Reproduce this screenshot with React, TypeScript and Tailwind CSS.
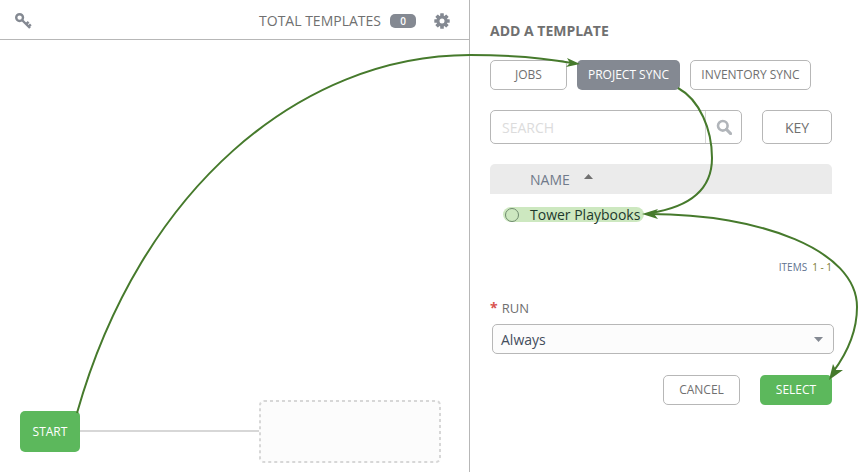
import React from "react";

function Key() {
  return (
    <svg width="17" height="17" viewBox="0 0 17 17" className="mt-[1px] text-[#848992]">
      <circle cx="4.6" cy="4.6" r="3.4" fill="none" stroke="currentColor" strokeWidth="2.4" />
      <path d="M7 7 L15 15 M11.2 11.2 L13.6 8.8 M13.6 13.6 L15.8 11.4" fill="none" stroke="currentColor" strokeWidth="2.4" />
    </svg>
  );
}

function Gear() {
  const teeth = [0, 45, 90, 135, 180, 225, 270, 315];
  return (
    <svg width="16" height="16" viewBox="0 0 16 16" className="text-[#848992]">
      {teeth.map((a) => (
        <rect key={a} x="6.2" y="0.3" width="3.6" height="3.4" rx="0.5" fill="currentColor" transform={`rotate(${a} 8 8)`} />
      ))}
      <circle cx="8" cy="8" r="4" fill="none" stroke="currentColor" strokeWidth="3" />
    </svg>
  );
}

function Search() {
  return (
    <svg width="16" height="16" viewBox="0 0 16 16" className="text-[#b1b5ba]">
      <circle cx="6.8" cy="6.8" r="4.8" fill="none" stroke="currentColor" strokeWidth="2.6" />
      <path d="M10.4 10.4 L14.6 14.6" fill="none" stroke="currentColor" strokeWidth="3" strokeLinecap="round" />
    </svg>
  );
}

function Arrows() {
  const c = "#467a2c";
  return (
    <svg width="858" height="472" viewBox="0 0 858 472" className="absolute left-0 top-0 pointer-events-none">
      <g fill="none" stroke={c} strokeWidth="2">
        <path d="M77 413 C 140 190 300 55 470 55 C 510 55 545 58 572 63" />
        <path d="M678 88 C 700 100 712 130 712 158 C 712 190 690 207 650 213" />
        <path d="M650 214 C 760 214 857 250 857 307 C 857 335 845 356 833 372" />
      </g>
      <g fill={c}>
        <path d="M580 64 L566 67 L570 63 L567 58 Z" />
        <path d="M642 214 L658 209 L654 214 L658 219 Z" />
        <path d="M829 380 L833 364 L836 370 L843 370 Z" />
      </g>
    </svg>
  );
}

export default function App() {
  return (
    <div className="relative flex h-[472px] w-[858px] overflow-hidden bg-white font-['Open_Sans',sans-serif] text-[#707070]">
      <div className="flex w-[470px] shrink-0 flex-col border-r border-[#b7b7b7]">
        <div className="flex h-10 items-center border-b border-[#b7b7b7] pl-[15px] pr-[19px] pt-[2px]">
          <Key />
          <div className="ml-auto text-[14px] leading-none text-[#707070]">TOTAL TEMPLATES</div>
          <div className="ml-[9px] flex h-[14px] w-[26px] items-center justify-center rounded-[5px] bg-[#848992] text-[10px] font-semibold leading-none text-white">0</div>
          <div className="ml-[18px] flex"><Gear /></div>
        </div>
        <div className="relative flex-1">
          <div className="absolute left-[20px] top-[371px] flex h-[41px] w-[60px] items-center justify-center rounded-[5px] bg-[#5cb85c] text-[12px] text-white">START</div>
          <div className="absolute left-[80px] top-[390px] h-[2px] w-[180px] bg-[#d7d7d7]" />
          <div className="absolute left-[259px] top-[360px] h-[63px] w-[182px] rounded-[5px] bg-[#fcfcfc]">
            <svg width="182" height="63" viewBox="0 0 182 63" className="block">
              <rect x="1" y="1" width="180" height="61" rx="4" fill="none" stroke="#d7d7d7" strokeWidth="2" strokeDasharray="3 3" />
            </svg>
          </div>
        </div>
      </div>

      <div className="flex flex-1 flex-col pl-[20px] pr-[26px]">
        <div className="mt-[21px] text-[14px] font-bold leading-[19px] text-[#707070]">ADD A TEMPLATE</div>
        <div className="mt-[20px] flex gap-[10px] text-[12px]">
          <div className="flex h-[30px] w-[77px] items-center justify-center rounded-[5px] border border-[#b7b7b7]">JOBS</div>
          <div className="flex h-[30px] w-[103px] items-center justify-center rounded-[5px] bg-[#848992] text-white">PROJECT SYNC</div>
          <div className="flex h-[30px] w-[121px] items-center justify-center rounded-[5px] border border-[#b7b7b7]">INVENTORY SYNC</div>
        </div>
        <div className="mt-[20px] flex">
          <div className="flex h-[34px] w-[252px] rounded-[5px] border border-[#b7b7b7]">
            <div className="flex flex-1 items-center border-r border-[#d7d7d7] pl-[11px] text-[14px] text-[#dcdcdc]">SEARCH</div>
            <div className="flex w-[35px] items-center justify-center"><Search /></div>
          </div>
          <div className="ml-[20px] flex h-[34px] w-[70px] items-center justify-center rounded-[5px] border border-[#b7b7b7] text-[14px]">KEY</div>
        </div>
        <div className="mt-[20px] flex h-[30px] w-[342px] items-center rounded-t-[5px] bg-[#ebebeb] pl-[40px] text-[14px] text-[#707a8a]">
          NAME
          <svg width="9" height="5" viewBox="0 0 9 5" className="mb-[5px] ml-[14px] text-[#707070]"><path d="M4.5 0 L9 5 L0 5 Z" fill="currentColor" /></svg>
        </div>
        <div className="ml-[13px] mt-[13px] flex h-[15px] w-[141px] items-center rounded-[8px] bg-[#cde8c0] text-[14px] text-[#1d3a2c]">
          <span className="ml-[2px] h-[14px] w-[14px] rounded-full border border-[#6f8b6e]" />
          <span className="ml-[11px] whitespace-nowrap">Tower Playbooks</span>
        </div>
        <div className="mt-[38px] flex w-[342px] justify-end text-[10px] leading-[14px]">
          <span className="text-[#5f7390]">ITEMS</span>
          <span className="ml-[5px] text-[#7d7a2e]">1 - 1</span>
        </div>
        <div className="mt-[26px] flex items-center text-[13px] leading-[16px]">
          <span className="mr-[4px] text-[14px] font-bold leading-none text-[#d9534f]">*</span>RUN
        </div>
        <div className="ml-[2px] mt-[8px] flex h-[30px] w-[342px] items-center justify-between rounded-[5px] border border-[#b7b7b7] bg-[#fcfcfc] pl-[8px] pr-[10px] text-[14px] text-[#444d5c]">
          Always
          <svg width="9" height="5" viewBox="0 0 9 5" className="text-[#848992]"><path d="M0 0 L9 0 L4.5 5 Z" fill="currentColor" /></svg>
        </div>
        <div className="mt-[21px] flex w-[342px] justify-end gap-[20px] text-[12px]">
          <div className="flex h-[30px] w-[77px] items-center justify-center rounded-[5px] border border-[#b7b7b7]">CANCEL</div>
          <div className="flex h-[30px] w-[72px] items-center justify-center rounded-[5px] bg-[#5cb85c] text-white">SELECT</div>
        </div>
      </div>

      <Arrows />
    </div>
  );
}
